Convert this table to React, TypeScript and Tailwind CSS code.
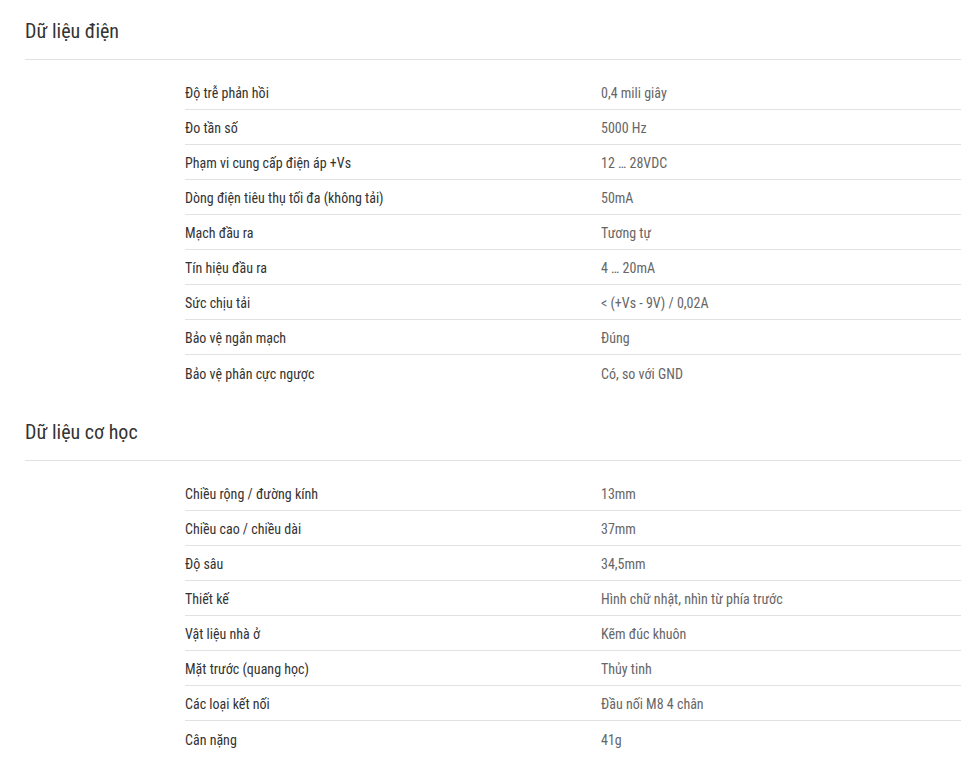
const electrical = [
  ['Độ trễ phản hồi', '0,4 mili giây'],
  ['Đo tần số', '5000 Hz'],
  ['Phạm vi cung cấp điện áp +Vs', '12 … 28VDC'],
  ['Dòng điện tiêu thụ tối đa (không tải)', '50mA'],
  ['Mạch đầu ra', 'Tương tự'],
  ['Tín hiệu đầu ra', '4 … 20mA'],
  ['Sức chịu tải', '< (+Vs - 9V) / 0,02A'],
  ['Bảo vệ ngắn mạch', 'Đúng'],
  ['Bảo vệ phân cực ngược', 'Có, so với GND'],
];

const mechanical = [
  ['Chiều rộng / đường kính', '13mm'],
  ['Chiều cao / chiều dài', '37mm'],
  ['Độ sâu', '34,5mm'],
  ['Thiết kế', 'Hình chữ nhật, nhìn từ phía trước'],
  ['Vật liệu nhà ở', 'Kẽm đúc khuôn'],
  ['Mặt trước (quang học)', 'Thủy tinh'],
  ['Các loại kết nối', 'Đầu nối M8 4 chân'],
  ['Cân nặng', '41g'],
];

function Section({ title, rows }: { title: string; rows: string[][] }) {
  return (
    <section>
      <h2 className="h-[60px] pt-[3px] flex items-center text-[20px] text-[#333] border-b border-[#e2e2e2]">
        {title}
      </h2>
      <div className="ml-[160px] pt-[15px]">
        {rows.map(([label, value], i) => (
          <div
            key={label}
            className={`grid grid-cols-[416px_1fr] h-[35px] pt-[3px] items-center text-[14px] ${
              i < rows.length - 1 ? 'border-b border-[#e2e2e2]' : ''
            }`}
          >
            <span className="text-[#333]">{label}</span>
            <span className="text-[#666]">{value}</span>
          </div>
        ))}
      </div>
    </section>
  );
}

export default function App() {
  return (
    <div
      className="bg-white min-h-screen pl-[25px] pb-4"
      style={{ fontFamily: '"Roboto Condensed", "Liberation Sans Narrow", Roboto, sans-serif' }}
    >
      <Section title="Dữ liệu điện" rows={electrical} />
      <div className="h-[11px]" />
      <Section title="Dữ liệu cơ học" rows={mechanical} />
    </div>
  );
}
